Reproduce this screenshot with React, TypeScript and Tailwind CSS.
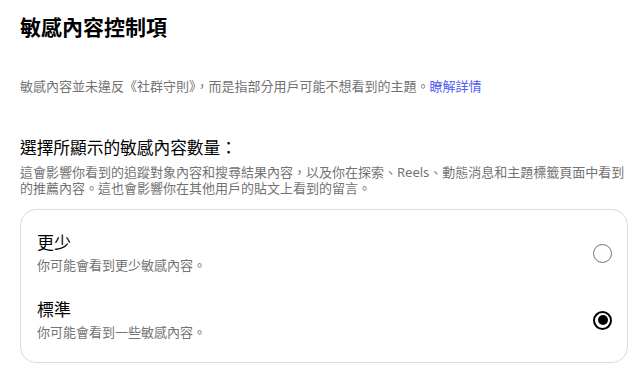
const options = [
  { id: "less", label: "更少", hint: "你可能會看到更少敏感內容。" },
  { id: "standard", label: "標準", hint: "你可能會看到一些敏感內容。" },
];

function Radio({ checked }: { checked: boolean }) {
  if (checked) {
    return (
      <span className="flex h-[19px] w-[19px] items-center justify-center rounded-full border-2 border-black">
        <span className="h-[10px] w-[10px] rounded-full bg-black" />
      </span>
    );
  }
  return <span className="h-[19px] w-[19px] rounded-full border border-[#737373]" />;
}

export default function App() {
  const selected = "standard";

  return (
    <div
      className="h-[392px] w-[642px] overflow-hidden bg-white pl-5 pr-[14px] text-black"
      style={{ fontFamily: '"Noto Sans", "Noto Sans CJK TC", sans-serif' }}
    >
      <h1 className="pt-[12px] text-[21px] font-bold leading-[30px]">敏感內容控制項</h1>

      <p className="mt-[35px] text-[13px] leading-[18px] text-[#737373]">
        敏感內容並未違反《社群守則》，而是指部分用戶可能不想看到的主題。
        <a href="#" className="text-[#4f5af5]">瞭解詳情</a>
      </p>

      <h2 className="mt-[41px] text-[16.7px] leading-[24px]">選擇所顯示的敏感內容數量：</h2>
      <p className="mt-[4px] text-[13px] leading-[16px] text-[#737373]">
        這會影響你看到的追蹤對象內容和搜尋結果內容，以及你在探索、Reels、動態消息和主題標籤頁面中看到的推薦內容。這也會影響你在其他用戶的貼文上看到的留言。
      </p>

      <div className="mt-[13px] flex flex-col gap-[25px] rounded-[16px] border border-[#dbdbdb] pb-[21px] pl-4 pr-[15px] pt-[22px]">
        {options.map((o) => (
          <div key={o.id} className="flex items-center justify-between">
            <div>
              <div className="text-[17px] leading-[22px]">{o.label}</div>
              <div className="mt-[2px] text-[13px] leading-[18px] text-[#737373]">{o.hint}</div>
            </div>
            <Radio checked={o.id === selected} />
          </div>
        ))}
      </div>
    </div>
  );
}
